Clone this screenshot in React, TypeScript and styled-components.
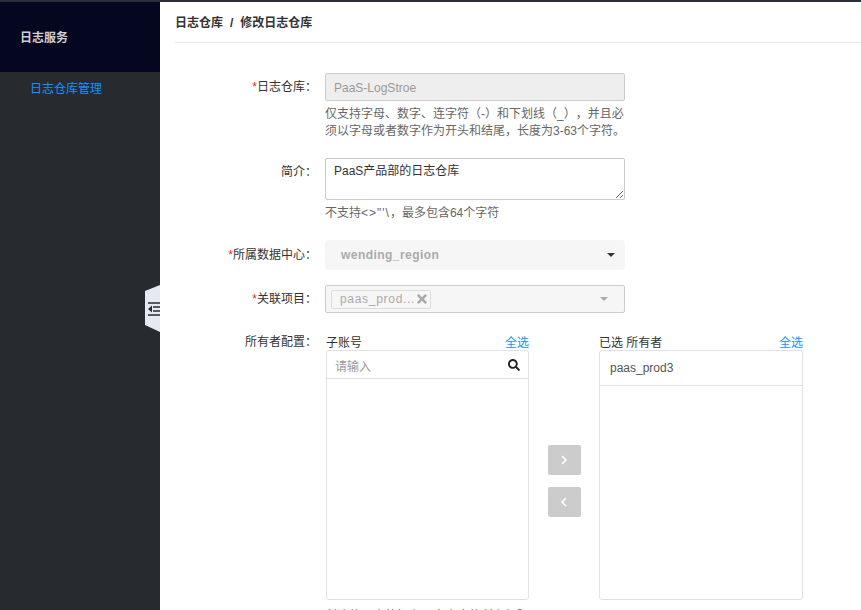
import React from "react";
import styled, { createGlobalStyle } from "styled-components";
import { FaSearch, FaTimes } from "react-icons/fa";

const GlobalStyle = createGlobalStyle`
  html, body {
    margin: 0;
    padding: 0;
    height: 100%;
    overflow: hidden;
    background: #fff;
  }
  body {
    font-family: "Liberation Sans", "Noto Sans CJK SC", sans-serif;
    font-size: 12px;
    color: #333;
    text-spacing-trim: space-all;
  }
  * { box-sizing: border-box; }
`;

const Page = styled.div`
  width: 861px;
  height: 610px;
  display: flex;
  flex-direction: column;
  overflow: hidden;
`;

const TopStrip = styled.div`
  height: 2px;
  flex: none;
  background: #2b2d3a;
`;

const Body = styled.div`
  flex: 1;
  display: flex;
  min-height: 0;
`;

const Sidebar = styled.aside`
  width: 160px;
  flex: none;
  background: #272b30;
  position: relative;
`;

const SideHeader = styled.div`
  height: 70px;
  padding-left: 20px;
  padding-bottom: 2px;
  display: flex;
  align-items: center;
  background: #050720;
  color: #d0d0d0;
  font-weight: 700;
  font-size: 12px;
`;

const SideItem = styled.div`
  height: 31px;
  padding-left: 30px;
  display: flex;
  align-items: center;
  color: #1890ff;
  font-size: 12px;
`;

const Collapse = styled.div`
  position: absolute;
  right: 0;
  top: 283px;
  width: 15px;
  height: 47px;
`;

const Main = styled.main`
  flex: 1;
  min-width: 0;
  padding-left: 15px;
`;

const Breadcrumb = styled.div`
  height: 41px;
  display: flex;
  align-items: baseline;
  gap: 7px;
  line-height: 42px;
  font-weight: 700;
  font-size: 12px;
  color: #333;
  border-bottom: 1px solid #e6e8ef;
`;

const Form = styled.div`
  padding-top: 30px;
  display: flex;
  flex-direction: column;
`;

const Row = styled.div<{ $mb: number }>`
  display: grid;
  grid-template-columns: 136px 300px;
  column-gap: 14px;
  margin-bottom: ${(p) => p.$mb}px;
`;

const Label = styled.label<{ $h?: number }>`
  height: ${(p) => p.$h ?? 28}px;
  margin-right: -6px;
  display: flex;
  align-items: center;
  justify-content: flex-end;
  color: #333;
  line-height: 1;
`;

const Star = styled.span`
  color: #f5222d;
`;

const TextInput = styled.div`
  height: 28px;
  padding: 1px 0 0 8px;
  display: flex;
  align-items: center;
  background: #eeeeee;
  border: 1px solid #cccccc;
  border-radius: 2px;
  color: #999;
`;

const TextArea = styled.textarea`
  display: block;
  width: 300px;
  height: 42px;
  padding: 4px 8px;
  margin: 0;
  border: 1px solid #cccccc;
  border-radius: 2px;
  font: inherit;
  color: #333;
  line-height: 17px;
  resize: both;
  outline: none;
`;

const Help = styled.div<{ $mt: number }>`
  margin-top: ${(p) => p.$mt}px;
  margin-right: -3px;
  color: #666;
  line-height: 17px;
`;

const Symbols = styled.span`
  letter-spacing: 1px;
`;

const FlatSelect = styled.div`
  height: 30px;
  padding: 0 10px 0 16px;
  display: flex;
  align-items: center;
  justify-content: space-between;
  background: #f6f6f6;
  border-radius: 4px;
  color: #aaa;
  font-weight: 700;
  letter-spacing: 0.45px;
`;

const Caret = styled.i<{ $color: string }>`
  width: 0;
  height: 0;
  border-left: 4px solid transparent;
  border-right: 4px solid transparent;
  border-top: 4px solid ${(p) => p.$color};
`;

const TagSelect = styled.div`
  height: 28px;
  padding: 0 16px 0 5px;
  display: flex;
  align-items: center;
  justify-content: space-between;
  background: #f6f6f6;
  border: 1px solid #cccccc;
  border-radius: 2px;
`;

const Tag = styled.span`
  height: 19px;
  width: 100px;
  padding: 0 3px 0 8px;
  display: flex;
  align-items: center;
  justify-content: space-between;
  border: 1px solid #dddddd;
  border-radius: 2px;
  color: #aaa;
  letter-spacing: 0.7px;

  svg {
    flex: none;
    font-size: 14px;
    color: #aaa;
  }
`;

const Transfer = styled.div`
  display: grid;
  grid-template-columns: 203px 70px 204px;
  width: 477px;
  margin-left: 1px;
`;

const Column = styled.div`
  display: flex;
  flex-direction: column;
`;

const ColumnHead = styled.div`
  height: 17px;
  display: flex;
  align-items: center;
  justify-content: space-between;
  color: #333;
`;

const SelectAll = styled.a`
  color: #1890ff;
`;

const ListBox = styled.div`
  height: 250px;
  border: 1px solid #dfe2e6;
  border-radius: 3px;
`;

const SearchRow = styled.div`
  height: 28px;
  padding: 1px 8px 0 8px;
  display: flex;
  align-items: center;
  justify-content: space-between;
  border-bottom: 1px solid #dfe2e6;
  color: #999;

  svg {
    font-size: 12px;
    color: #222;
  }
`;

const ListItem = styled.div`
  height: 35px;
  padding-left: 10px;
  display: flex;
  align-items: center;
  border-bottom: 1px solid #dfe2e6;
  color: #555;
`;

const Arrows = styled.div`
  padding-top: 112px;
  display: flex;
  flex-direction: column;
  align-items: center;
  gap: 12px;
`;

const ArrowButton = styled.div`
  width: 33px;
  height: 30px;
  display: flex;
  align-items: center;
  justify-content: center;
  background: #cccccc;
  border-radius: 2px;
`;

const Chevron = ({ d }: { d: string }) => (
  <svg width="8" height="10" viewBox="0 0 8 10">
    <path d={d} fill="none" stroke="#fff" strokeWidth="1.6" />
  </svg>
);

const App: React.FC = () => {
  return (
    <Page>
      <GlobalStyle />
      <TopStrip />
      <Body>
        <Sidebar>
          <SideHeader>日志服务</SideHeader>
          <SideItem>日志仓库管理</SideItem>
          <Collapse>
            <svg width="15" height="47" viewBox="0 0 15 47">
              <path d="M15 0 L0 6 V40 L15 47 Z" fill="#e6e9f2" />
              <path d="M3 18 H15 M8 22 H15 M8 26 H15 M3 30 H15" stroke="#272b30" strokeWidth="1.6" />
              <path d="M7 20.5 V27.5 L3 24 Z" fill="#272b30" />
            </svg>
          </Collapse>
        </Sidebar>
        <Main>
          <Breadcrumb>
            <span>日志仓库</span>
            <span>/</span>
            <span>修改日志仓库</span>
          </Breadcrumb>
          <Form>
            <Row $mb={18}>
              <Label><Star>*</Star>日志仓库：</Label>
              <div>
                <TextInput>PaaS-LogStroe</TextInput>
                <Help $mt={5}>
                  仅支持字母、数字、连字符（-）和下划线（_），并且必须以字母或者数字作为开头和结尾，长度为3-63个字符。
                </Help>
              </div>
            </Row>
            <Row $mb={18}>
              <Label>简介：</Label>
              <div>
                <TextArea defaultValue="PaaS产品部的日志仓库" />
                <Help $mt={5}>不支持<Symbols>&lt;&gt;"'\</Symbols>，最多包含64个字符</Help>
              </div>
            </Row>
            <Row $mb={15}>
              <Label $h={30}><Star>*</Star>所属数据中心：</Label>
              <FlatSelect>
                wending_region
                <Caret $color="#333" />
              </FlatSelect>
            </Row>
            <Row $mb={20}>
              <Label><Star>*</Star>关联项目：</Label>
              <TagSelect>
                <Tag>
                  paas_prod...
                  <FaTimes />
                </Tag>
                <Caret $color="#aaa" />
              </TagSelect>
            </Row>
            <Row $mb={0}>
              <Label $h={17}>所有者配置：</Label>
              <div>
                <Transfer>
                  <Column>
                    <ColumnHead>
                      <span>子账号</span>
                      <SelectAll>全选</SelectAll>
                    </ColumnHead>
                    <ListBox>
                      <SearchRow>
                        请输入
                        <FaSearch />
                      </SearchRow>
                    </ListBox>
                  </Column>
                  <Arrows>
                    <ArrowButton><Chevron d="M2 1 L6 5 L2 9" /></ArrowButton>
                    <ArrowButton><Chevron d="M6 1 L2 5 L6 9" /></ArrowButton>
                  </Arrows>
                  <Column>
                    <ColumnHead>
                      <span>已选 所有者</span>
                      <SelectAll>全选</SelectAll>
                    </ColumnHead>
                    <ListBox>
                      <ListItem>paas_prod3</ListItem>
                    </ListBox>
                  </Column>
                </Transfer>
                <Help $mt={8}>所选的用户将拥有日志仓库的所有权限</Help>
              </div>
            </Row>
          </Form>
        </Main>
      </Body>
    </Page>
  );
};

export default App;
